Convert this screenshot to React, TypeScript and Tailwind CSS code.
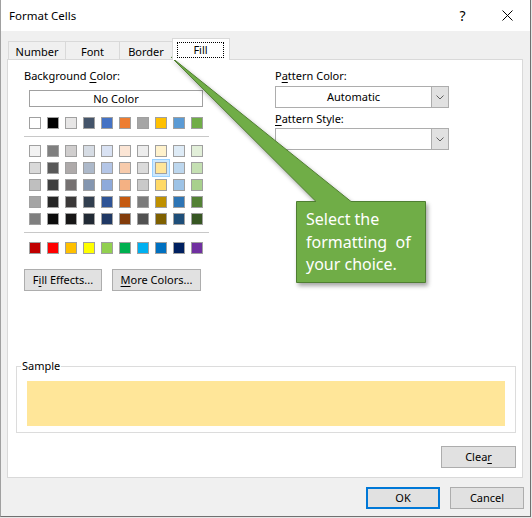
import type { ReactNode } from "react";

const topColors = ["#ffffff", "#000000", "#e7e6e6", "#44546a", "#4472c4", "#ed7d31", "#a5a5a5", "#ffc000", "#5b9bd5", "#70ad47"];

const themeRows = [
  ["#f2f2f2", "#7f7f7f", "#d0cece", "#d6dce4", "#d9e2f3", "#fbe5d5", "#ededed", "#fff2cc", "#deebf6", "#e2efd9"],
  ["#d9d9d9", "#595959", "#aeaaaa", "#adb9ca", "#b4c6e7", "#f7cbac", "#dbdbdb", "#ffe599", "#bdd7ee", "#c5e0b3"],
  ["#bfbfbf", "#3f3f3f", "#757171", "#8496b0", "#8eaadb", "#f4b183", "#c9c9c9", "#ffd966", "#9dc3e6", "#a8d08d"],
  ["#a5a5a5", "#262626", "#3a3838", "#323f4f", "#2f5496", "#c55a11", "#7b7b7b", "#bf9000", "#2e75b5", "#538135"],
  ["#7f7f7f", "#0c0c0c", "#171616", "#222a35", "#1f3864", "#833c0b", "#525252", "#7f6000", "#1e4e79", "#375623"]
];

const standardColors = ["#c00000", "#ff0000", "#ffc000", "#ffff00", "#92d050", "#00b050", "#00b0f0", "#0070c0", "#002060", "#7030a0"];

function Swatch({ color, selected }: { color: string; selected?: boolean }) {
  return (
    <span
      className={`block h-[12px] w-[12px] border border-[#a0a0a0] ${selected ? "shadow-[0_0_0_2px_#cce8ff,0_0_0_3px_#99d1ff]" : ""}`}
      style={{ backgroundColor: color }}
    />
  );
}

function U({ children }: { children: ReactNode }) {
  return <span className="underline underline-offset-2">{children}</span>;
}

function Button({ children, className = "" }: { children: ReactNode; className?: string }) {
  return (
    <div className={`flex h-[22px] items-center justify-center border border-[#adadad] bg-[#e1e1e1] ${className}`}>
      {children}
    </div>
  );
}

function Dropdown({ value }: { value?: string }) {
  return (
    <div className="flex h-[22px] w-[174px] border border-[#adadad] bg-white">
      <div className="flex flex-1 items-center justify-center">{value}</div>
      <div className="-my-px -mr-px flex w-[18px] items-center justify-center border border-[#adadad] bg-[#e1e1e1]">
        <svg width="8" height="5" viewBox="0 0 8 5">
          <polyline points="0.5,0.5 4,4 7.5,0.5" fill="none" stroke="#606060" strokeWidth="1" />
        </svg>
      </div>
    </div>
  );
}

export default function App() {
  return (
    <div className="relative h-[518px] w-[532px] bg-[#e6e6e6] font-['Noto_Sans',sans-serif] text-[11px] leading-[16px] text-black">
      <div className="flex h-[517px] w-[531px] flex-col border-b border-l border-r border-b-[#707070] border-l-[#a0a0a0] border-r-[#707070] bg-[#f0f0f0]">
        {/* title bar */}
        <div className="flex h-[31px] items-center bg-white">
          <span className="pl-[8px] text-[11.5px]">Format Cells</span>
          <div className="ml-auto flex h-full">
            <div className="flex w-[45px] items-center justify-center text-[14px]">?</div>
            <div className="flex w-[45px] items-center justify-center">
              <svg width="11" height="11" viewBox="0 0 11 11">
                <path d="M0.5 0.5 L10.5 10.5 M10.5 0.5 L0.5 10.5" stroke="#000" strokeWidth="1" />
              </svg>
            </div>
          </div>
        </div>

        {/* tabs */}
        <div className="mt-[7px] flex items-end pl-[7px]">
          <div className="flex h-[18px] w-[58px] justify-center border border-b-0 border-[#d9d9d9] pt-[2px]">Number</div>
          <div className="-ml-px flex h-[18px] w-[55px] justify-center border border-b-0 border-[#d9d9d9] pt-[2px]">Font</div>
          <div className="-ml-px flex h-[18px] w-[54px] justify-center border border-b-0 border-[#d9d9d9] pt-[2px]">Border</div>
          <div className="relative z-10 -mb-px -ml-px flex h-[22px] w-[58px] border border-b-0 border-[#d9d9d9] bg-white pl-[4px] pt-[3px]">
            <span className="flex h-[16px] w-[47px] items-center justify-center border border-dotted border-black">Fill</span>
          </div>
        </div>

        {/* tab panel */}
        <div className="ml-[6px] mr-[7px] flex h-[419px] flex-col border border-[#d9d9d9] bg-white">
          <div className="flex pl-[16px] pt-[8px]">
            <div className="flex w-[185px] flex-col">
              <div>
                Background <U>C</U>olor:
              </div>
              <div className="ml-[5px] mt-[6px] flex h-[17px] w-[174px] items-center justify-center border border-[#a0a0a0] bg-white">
                No Color
              </div>
              <div className="ml-[5px] mt-[10px] flex gap-[6px]">
                {topColors.map((c) => (
                  <Swatch key={c} color={c} />
                ))}
              </div>
              <div className="mt-[7px] h-px bg-[#c8c8c8]" />
              <div className="ml-[5px] mt-[8px] flex flex-col gap-[5px]">
                {themeRows.map((row, r) => (
                  <div key={r} className="flex gap-[6px]">
                    {row.map((c, i) => (
                      <Swatch key={i} color={c} selected={r === 1 && i === 7} />
                    ))}
                  </div>
                ))}
              </div>
              <div className="mt-[7px] h-px bg-[#c8c8c8]" />
              <div className="ml-[5px] mt-[9px] flex gap-[6px]">
                {standardColors.map((c) => (
                  <Swatch key={c} color={c} />
                ))}
              </div>
              <div className="mt-[15px] flex gap-[10px]">
                <Button className="w-[78px]">
                  F<U>i</U>ll Effects...
                </Button>
                <Button className="w-[89px]">
                  <U>M</U>ore Colors...
                </Button>
              </div>
            </div>

            <div className="ml-[66px] flex flex-col">
              <div>
                P<U>a</U>ttern Color:
              </div>
              <div className="mt-[2px]">
                <Dropdown value="Automatic" />
              </div>
              <div className="mt-[3px]">
                <U>P</U>attern Style:
              </div>
              <div className="mt-px">
                <Dropdown />
              </div>
            </div>
          </div>

          <fieldset className="ml-[8px] mt-auto w-[500px] border border-[#dcdcdc] p-0">
            <legend className="ml-[4px] px-px">Sample</legend>
            <div className="px-[10px] pb-[6px] pt-[7px]">
              <div className="h-[45px] bg-[#ffe699]" />
            </div>
          </fieldset>
          <div className="mr-[6px] mt-[13px] self-end pb-[9px]">
            <Button className="w-[75px]">
              Clea<U>r</U>
            </Button>
          </div>
        </div>

        {/* dialog buttons */}
        <div className="mt-[9px] flex justify-end gap-[10px] pr-[6px]">
          <div className="flex h-[22px] w-[74px] items-center justify-center border-2 border-[#0078d7] bg-[#e1e1e1]">OK</div>
          <Button className="w-[74px]">Cancel</Button>
        </div>
      </div>

      {/* callout overlay */}
      <svg className="pointer-events-none absolute left-0 top-0" width="532" height="518" viewBox="0 0 532 518">
        <defs>
          <filter id="callout-shadow" x="-10%" y="-10%" width="130%" height="130%">
            <feDropShadow dx="2" dy="3" stdDeviation="2" floodColor="#000" floodOpacity="0.35" />
          </filter>
        </defs>
        <polygon
          points="171,57 351,201.5 425.5,201.5 425.5,282.5 296.5,282.5 296.5,201.5 316,201.5"
          fill="#70ad47"
          stroke="#507e32"
          strokeWidth="1"
          filter="url(#callout-shadow)"
        />
      </svg>
      <div className="pointer-events-none absolute left-[296px] top-[201px] h-[82px] w-[130px] pl-[10px] pt-[7px] text-[16px] leading-[22.5px] text-white">
        <div>Select the</div>
        <div>formatting&nbsp; of</div>
        <div>your choice.</div>
      </div>
    </div>
  );
}
